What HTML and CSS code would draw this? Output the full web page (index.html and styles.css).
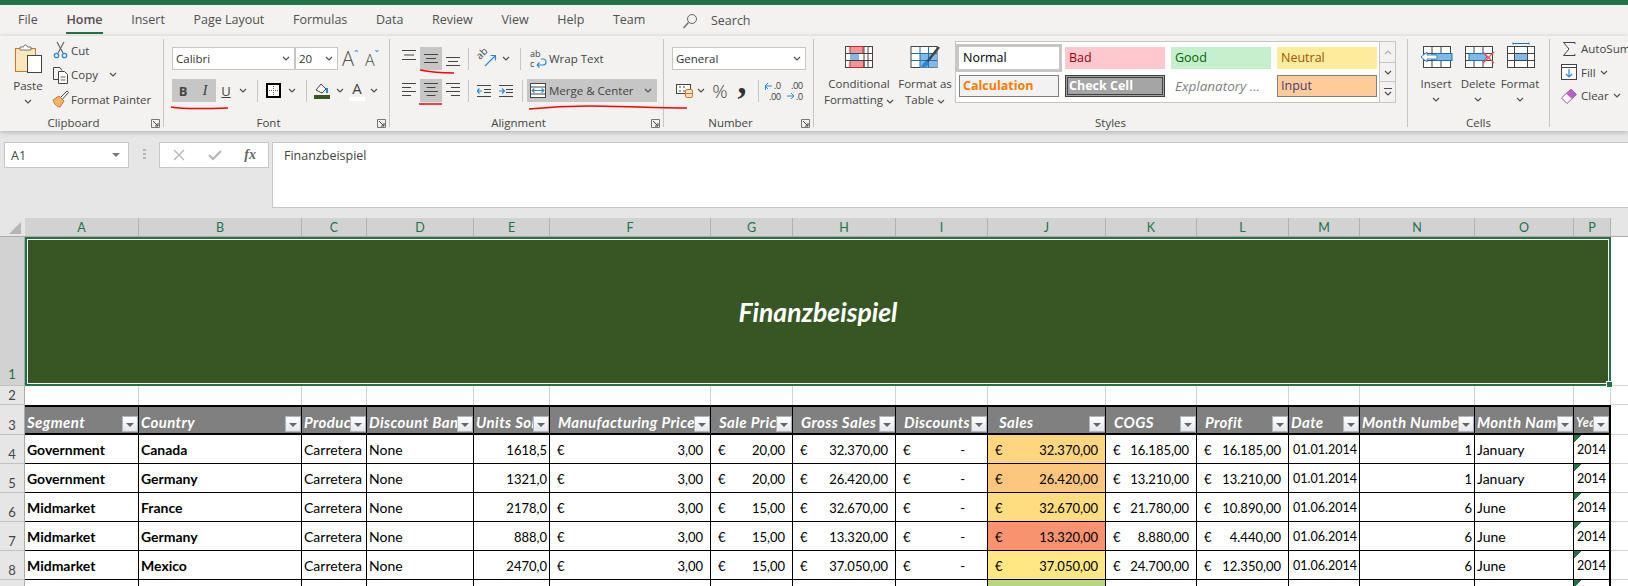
FILE: index.html
```html
<!DOCTYPE html>
<html lang="en">
<head>
  <meta charset="UTF-8">
  <title>Finanzbeispiel - Excel</title>
  <link rel="stylesheet" href="styles.css">
</head>
<body>
  <svg class="defs" width="0" height="0">
    <symbol id="chev" viewBox="0 0 8 5"><polyline points="1,1 4,4 7,1" fill="none" stroke="#505050" stroke-width="1.2"/></symbol>
    <symbol id="launch" viewBox="0 0 9 9"><path d="M.5 8.500V.5h8v8z" fill="none" stroke="#777"/><path d="M2 2l5 5M7 4v3H4" fill="none" stroke="#444"/></symbol>
    <symbol id="ind" viewBox="0 0 14 12"><path d="M0 .5h14M0 11.500h14M7 4.500h7M7 7.500h7" stroke="#444"/></symbol>
  </svg>

  <div class="titlebar"></div>

  <nav class="tabs">
    <span>File</span>
    <span class="tab-on">Home</span>
    <span>Insert</span>
    <span>Page Layout</span>
    <span>Formulas</span>
    <span>Data</span>
    <span>Review</span>
    <span>View</span>
    <span>Help</span>
    <span>Team</span>
    <span class="tab-search">
      <svg width="16" height="16" viewBox="0 0 16 16"><circle cx="10" cy="6" r="4.500" fill="none" stroke="#666"/><path d="M6.500 9.500L1.500 15" stroke="#666" stroke-width="1.3"/></svg>
      Search
    </span>
  </nav>

  <section class="ribbon">
    <div class="group g-clip">
      <div class="group-body">
        <div class="paste">
          <svg width="28" height="30" viewBox="0 0 28 30">
            <rect x="1.500" y="5.500" width="20" height="23" fill="#fbe7bd" stroke="#d5762a"/>
            <path d="M6 7V4h3.500a2 2 0 0 1 4 0H17v3z" fill="#fff" stroke="#777"/>
            <rect x="13.500" y="12.500" width="14" height="17" fill="#fff" stroke="#444"/>
          </svg>
          <span>Paste</span>
          <svg class="chev" viewBox="0 0 8 5"><use href="#chev"/></svg>
        </div>
        <div class="clip-list">
          <div class="clip-item">
            <svg width="17" height="18" viewBox="0 0 17 18"><path d="M5 1l6 11M12 1L6 12" stroke="#666" stroke-width="1.2" fill="none"/><circle cx="4.500" cy="14.500" r="2.200" fill="none" stroke="#2b88d8" stroke-width="1.3"/><circle cx="12.500" cy="14.500" r="2.200" fill="none" stroke="#2b88d8" stroke-width="1.3"/></svg>
            Cut
          </div>
          <div class="clip-item">
            <svg width="17" height="18" viewBox="0 0 17 18"><path d="M6 13.500H1.500V1.500H8l2 3" fill="none" stroke="#444"/><path d="M6.500 5.500h6l3 3v9h-9z" fill="#fff" stroke="#444"/><path d="M8.500 11h5M8.500 14h5" stroke="#666"/></svg>
            Copy
            <svg class="chev copy-chev" viewBox="0 0 8 5"><use href="#chev"/></svg>
          </div>
          <div class="clip-item">
            <svg width="17" height="18" viewBox="0 0 17 18"><path d="M1 10l6-4 5 5-4 6c-3 0-6-3-7-7z" fill="#f7b267" stroke="#d5762a"/><path d="M9 7l6-6 1.500 1.500-6 6.500" fill="#fff" stroke="#444"/></svg>
            Format Painter
          </div>
        </div>
      </div>
      <div class="group-label"><span>Clipboard</span><svg class="launch" viewBox="0 0 9 9"><use href="#launch"/></svg></div>
    </div>
    <div class="sep"></div>

    <div class="group g-font">
      <div class="tool-rows">
        <div class="tool-row">
          <div class="combo combo-font"><span>Calibri</span><svg class="chev" viewBox="0 0 8 5"><use href="#chev"/></svg></div>
          <div class="combo combo-size"><span>20</span><svg class="chev" viewBox="0 0 8 5"><use href="#chev"/></svg></div>
          <div class="grow-a"><span class="a-big">A</span><sup>ˆ</sup></div>
          <div class="grow-a shrink-a"><span class="a-small">A</span><sup>ˇ</sup></div>
        </div>
        <div class="tool-row">
          <div class="tb tb-22 on glyph-b">B</div>
          <div class="tb tb-22 on glyph-i">I</div>
          <div class="tb tb-20 glyph-u">U</div>
          <div class="tb tb-14"><svg class="chev" viewBox="0 0 8 5"><use href="#chev"/></svg></div>
          <div class="vsep vs-font1"></div>
          <div class="tb tb-24">
            <svg width="15" height="15" viewBox="0 0 15 15"><rect x="1" y="1" width="13" height="13" fill="#fff" stroke="#000" stroke-width="2"/><path d="M7.500 3v9M3 7.500h9" stroke="#666" stroke-dasharray="1 1"/></svg>
          </div>
          <div class="tb tb-14"><svg class="chev" viewBox="0 0 8 5"><use href="#chev"/></svg></div>
          <div class="vsep vs-font2"></div>
          <div class="tb tb-24 tb-col">
            <svg width="16" height="12" viewBox="0 0 16 12"><path d="M2 7l5-6 5 5-4 4z" fill="#fff" stroke="#444"/><path d="M13 5v5" stroke="#2b88d8" stroke-width="2"/></svg>
            <i class="colorbar colorbar-green"></i>
          </div>
          <div class="tb tb-12"><svg class="chev" viewBox="0 0 8 5"><use href="#chev"/></svg></div>
          <div class="tb tb-22 tb-col glyph-a">A<i class="colorbar colorbar-white"></i></div>
          <div class="tb tb-12"><svg class="chev" viewBox="0 0 8 5"><use href="#chev"/></svg></div>
        </div>
      </div>
      <div class="group-label"><span>Font</span><svg class="launch" viewBox="0 0 9 9"><use href="#launch"/></svg></div>
    </div>
    <div class="sep"></div>

    <div class="group g-align">
      <div class="tool-rows">
        <div class="tool-row">
          <div class="tb tb-22"><svg width="14" height="23" viewBox="0 0 14 23"><path d="M0 3.500h14M2 8h10M0 12.500h14" stroke="#444"/></svg></div>
          <div class="tb tb-22 on"><svg width="14" height="23" viewBox="0 0 14 23"><path d="M0 7.500h14M2 11.500h10M0 15.500h14" stroke="#444"/></svg></div>
          <div class="tb tb-22"><svg width="14" height="23" viewBox="0 0 14 23"><path d="M0 10.500h14M2 14.500h10M0 18.500h14" stroke="#444"/></svg></div>
          <div class="vsep vs-align"></div>
          <div class="tb tb-orient">
            <svg class="svg-free" width="18" height="20" viewBox="0 0 18 20"><text x="1" y="11" class="svg-txt" transform="rotate(-45 1 11)">ab</text><path d="M6 17L16 7M11.500 6.500H16.500V11.500" fill="none" stroke="#2b88d8" stroke-width="1.2"/></svg>
            <svg class="chev" viewBox="0 0 8 5"><use href="#chev"/></svg>
          </div>
          <div class="vsep vs-align2"></div>
          <div class="tb tb-wrap">
            <svg class="svg-free" width="17" height="20" viewBox="0 0 17 20"><text x="0" y="8" class="svg-wrap">ab</text><text x="0" y="18" class="svg-wrap">c</text><path d="M7 16h6a2.500 2.500 0 0 0 0-6h-2M7 16l2.500-2.500M7 16l2.500 2.500" fill="none" stroke="#2b88d8" stroke-width="1.1"/></svg>
            Wrap Text
          </div>
        </div>
        <div class="tool-row">
          <div class="tb tb-22"><svg width="14" height="23" viewBox="0 0 14 23"><path d="M0 4.500h14M0 8.500h9M0 12.500h14M0 16.500h9" stroke="#444"/></svg></div>
          <div class="tb tb-22 on"><svg width="14" height="23" viewBox="0 0 14 23"><path d="M0 4.500h14M2.500 8.500h9M0 12.500h14M2.500 16.500h9" stroke="#444"/></svg></div>
          <div class="tb tb-22"><svg width="14" height="23" viewBox="0 0 14 23"><path d="M0 4.500h14M5 8.500h9M0 12.500h14M5 16.500h9" stroke="#444"/></svg></div>
          <div class="vsep vs-align"></div>
          <div class="tb tb-indent">
            <svg width="14" height="12" viewBox="0 0 14 12"><use href="#ind"/><path d="M5 6H0M2.500 3.500L0 6l2.500 2.500" fill="none" stroke="#2b88d8" stroke-width="1.2"/></svg>
          </div>
          <div class="tb tb-indent">
            <svg width="14" height="12" viewBox="0 0 14 12"><use href="#ind"/><path d="M0 6h5M3 3.500L5.500 6 3 8.500" fill="none" stroke="#2b88d8" stroke-width="1.2"/></svg>
          </div>
          <div class="vsep vs-align3"></div>
          <div class="tb tb-merge on">
            <svg width="16" height="15" viewBox="0 0 16 15"><rect x=".5" y=".5" width="15" height="14" fill="#fff" stroke="#444"/><path d="M.5 4h15M.5 11h15" stroke="#444"/><path d="M2 7.500h12M4.500 5.500l-2.500 2 2.500 2M11.500 5.500l2.500 2-2.500 2" fill="none" stroke="#2b88d8" stroke-width="1.1"/></svg>
            <span>Merge &amp; Center</span>
            <svg class="chev" viewBox="0 0 8 5"><use href="#chev"/></svg>
          </div>
        </div>
      </div>
      <div class="group-label"><span>Alignment</span><svg class="launch" viewBox="0 0 9 9"><use href="#launch"/></svg></div>
    </div>
    <div class="sep"></div>

    <div class="group g-number">
      <div class="tool-rows">
        <div class="tool-row">
          <div class="combo combo-num"><span>General</span><svg class="chev" viewBox="0 0 8 5"><use href="#chev"/></svg></div>
        </div>
        <div class="tool-row">
          <div class="tb tb-acct">
            <svg width="18" height="15" viewBox="0 0 18 15"><rect x=".5" y="1.500" width="14" height="9" fill="#fff" stroke="#444"/><path d="M3 4h2M3 8h2M7 4h2M7 8h2" stroke="#444"/><rect x="9.500" y="6.500" width="7" height="8" rx="1.500" fill="#fce3c4" stroke="#d5762a"/><path d="M9.500 10.500h7" stroke="#d5762a"/></svg>
            <svg class="chev" viewBox="0 0 8 5"><use href="#chev"/></svg>
          </div>
          <div class="tb tb-24 glyph-pct">%</div>
          <div class="tb tb-20 glyph-comma">,</div>
          <div class="vsep vs-num"></div>
          <div class="tb tb-22">
            <svg class="svg-free" width="16" height="18" viewBox="0 0 16 18"><text x="16" y="7" class="svg-num">.0</text><text x="16" y="17.500" class="svg-num">.00</text><path d="M7 4H0M3 1L0 4l3 3M.5 4v4" fill="none" stroke="#2b88d8"/></svg>
          </div>
          <div class="tb tb-22">
            <svg class="svg-free" width="16" height="18" viewBox="0 0 16 18"><text x="16" y="7" class="svg-num">.00</text><text x="16" y="17.500" class="svg-num">.0</text><path d="M0 14h7M4 11l3 3-3 3" fill="none" stroke="#2b88d8"/></svg>
          </div>
        </div>
      </div>
      <div class="group-label"><span>Number</span><svg class="launch" viewBox="0 0 9 9"><use href="#launch"/></svg></div>
    </div>
    <div class="sep"></div>

    <div class="group g-styles">
      <div class="styles-body">
        <div class="big big-cf">
          <svg width="30" height="30" viewBox="0 0 30 30">
            <rect x="1.500" y="4.500" width="27" height="21" fill="#fff" stroke="#444"/>
            <rect x="6" y="4.500" width="13" height="7" fill="#f1969b" stroke="#d8232a"/>
            <rect x="6" y="11.500" width="9" height="7" fill="#83b9e8"/>
            <rect x="6" y="18.500" width="14" height="7" fill="#f1969b" stroke="#d8232a"/>
            <path d="M20 4.500v21M24 4.500v21M1.500 11.500h27M1.500 18.500h27" stroke="#444" fill="none"/>
          </svg>
          <span>Conditional</span>
          <span>Formatting <svg class="chev" viewBox="0 0 8 5"><use href="#chev"/></svg></span>
        </div>
        <div class="big big-ft">
          <svg width="30" height="30" viewBox="0 0 30 30">
            <rect x="1" y="4.500" width="26" height="21" fill="#fff" stroke="#444"/>
            <rect x="10" y="11.500" width="17" height="14" fill="#83b9e8"/>
            <path d="M10 4.500v21M18.500 4.500v21M1 11.500h26M1 18.500h26" stroke="#1f6fb5" fill="none"/>
            <path d="M29 5L17 20" stroke="#444" stroke-width="2.500"/>
            <path d="M17 19c-3 0-4 3-6 6 3 1 7 0 8-4z" fill="#2b88d8"/>
          </svg>
          <span>Format as</span>
          <span>Table <svg class="chev" viewBox="0 0 8 5"><use href="#chev"/></svg></span>
        </div>
        <div class="gallery">
          <div class="gallery-grid">
            <div class="st st-normal">Normal</div>
            <div class="st st-bad">Bad</div>
            <div class="st st-good">Good</div>
            <div class="st st-neutral">Neutral</div>
            <div class="st st-calc">Calculation</div>
            <div class="st st-check">Check Cell</div>
            <div class="st st-expl">Explanatory ...</div>
            <div class="st st-input">Input</div>
          </div>
          <div class="gallery-scroll">
            <div class="gs gs-up"><svg class="chev chev-up" viewBox="0 0 8 5"><use href="#chev"/></svg></div>
            <div class="gs gs-mid"><svg class="chev" viewBox="0 0 8 5"><use href="#chev"/></svg></div>
            <div class="gs gs-more"><i></i><svg class="chev" viewBox="0 0 8 5"><use href="#chev"/></svg></div>
          </div>
        </div>
      </div>
      <div class="group-label"><span>Styles</span></div>
    </div>
    <div class="sep"></div>

    <div class="group g-cells">
      <div class="styles-body">
        <div class="big big-cell">
          <svg width="33" height="30" viewBox="0 0 33 30">
            <rect x="3.500" y="4.500" width="27" height="21" fill="#fff" stroke="#444"/>
            <path d="M12 4.500v21M21 4.500v21M3.500 11.500h27M3.500 18.500h27" stroke="#444" fill="none"/>
            <rect x="14" y="11.500" width="18" height="7" fill="#83b9e8" stroke="#1f6fb5"/>
            <path d="M17 13H7V10L1 15l6 5v-3h10z" fill="#fff" stroke="#2b88d8"/>
          </svg>
          <span>Insert</span>
          <svg class="chev chev-big" viewBox="0 0 8 5"><use href="#chev"/></svg>
        </div>
        <div class="big big-cell">
          <svg width="33" height="30" viewBox="0 0 33 30">
            <rect x="3.500" y="4.500" width="27" height="21" fill="#fff" stroke="#444"/>
            <path d="M12 4.500v21M21 4.500v21M3.500 11.500h27M3.500 18.500h27" stroke="#444" fill="none"/>
            <path d="M7 11.500h15l3 3.500-3 3.500H7z" fill="#83b9e8" stroke="#1f6fb5"/>
            <path d="M21 10l11 11M32 10L21 21" stroke="#f0525a" stroke-width="1.300"/>
          </svg>
          <span>Delete</span>
          <svg class="chev chev-big" viewBox="0 0 8 5"><use href="#chev"/></svg>
        </div>
        <div class="big big-cell">
          <svg width="33" height="30" viewBox="0 0 33 30">
            <path d="M9 .5v2M25 .5v2M9 1.500h16" stroke="#1f6fb5" fill="none"/>
            <rect x="3.500" y="4.500" width="27" height="21" fill="#fff" stroke="#444"/>
            <rect x="10.500" y="11.500" width="13" height="7" fill="#83b9e8"/>
            <path d="M10.500 4.500v21M23.500 4.500v21M3.500 11.500h27M3.500 18.500h27" stroke="#444" fill="none"/>
          </svg>
          <span>Format</span>
          <svg class="chev chev-big" viewBox="0 0 8 5"><use href="#chev"/></svg>
        </div>
      </div>
      <div class="group-label"><span>Cells</span></div>
    </div>
    <div class="sep"></div>

    <div class="group g-edit">
      <div class="edit-item">
        <svg width="16" height="16" viewBox="0 0 16 16"><path d="M14 3V1.500H2.500L8 8l-5.500 6.500H14V13" fill="none" stroke="#444"/></svg>
        AutoSum
      </div>
      <div class="edit-item">
        <svg width="16" height="16" viewBox="0 0 16 16"><rect x=".5" y=".5" width="15" height="15" fill="#fff" stroke="#444"/><path d="M.5 3.500h15" stroke="#444"/><path d="M8 5v8M5 10l3 3 3-3" fill="none" stroke="#2b88d8" stroke-width="1.200"/></svg>
        Fill <svg class="chev" viewBox="0 0 8 5"><use href="#chev"/></svg>
      </div>
      <div class="edit-item">
        <svg width="16" height="16" viewBox="0 0 16 16"><path d="M10 1l5.500 5.500L6 15.500.5 10z" fill="#fff" stroke="#a44db0"/><path d="M10 1l5.500 5.500L11 11 5 5.500z" fill="#b565c0"/></svg>
        Clear <svg class="chev" viewBox="0 0 8 5"><use href="#chev"/></svg>
      </div>
    </div>
  </section>

  <section class="formula">
    <div class="namebox"><span>A1</span><i class="name-arrow"></i></div>
    <div class="grip"></div>
    <div class="fx-box">
      <svg width="12" height="12" viewBox="0 0 12 12"><path d="M1 1l10 10M11 1L1 11" stroke="#b5b5b5" stroke-width="1.300"/></svg>
      <svg width="14" height="12" viewBox="0 0 14 12"><path d="M1 6l4 4 8-8" fill="none" stroke="#b5b5b5" stroke-width="2"/></svg>
      <span class="fx">fx</span>
    </div>
    <div class="formula-input">Finanzbeispiel</div>
  </section>

  <table class="sheet">
    <colgroup>
      <col class="c-rh"><col class="c-a"><col class="c-b"><col class="c-c"><col class="c-d"><col class="c-e"><col class="c-f"><col class="c-g"><col class="c-h"><col class="c-i"><col class="c-j"><col class="c-k"><col class="c-l"><col class="c-m"><col class="c-n"><col class="c-o"><col class="c-p"><col class="c-q">
    </colgroup>
    <tr class="r-cols">
      <th class="corner"><i></i></th>
      <th>A</th><th>B</th><th>C</th><th>D</th><th>E</th><th>F</th><th>G</th><th>H</th><th>I</th><th>J</th><th>K</th><th>L</th><th>M</th><th>N</th><th>O</th><th>P</th>
      <th class="col-rest"></th>
    </tr>
    <tr class="r-title">
      <th class="rh rh-on">1</th>
      <td colspan="16" class="title">Finanzbeispiel<i class="handle"></i></td>
      <td class="q"></td>
    </tr>
    <tr class="r-gap">
      <th class="rh">2</th>
      <td></td><td></td><td></td><td></td><td></td><td></td><td></td><td></td><td></td><td></td><td></td><td></td><td></td><td></td><td></td><td></td>
      <td class="q"></td>
    </tr>
    <tr class="r-head">
      <th class="rh">3</th>
      <td>Segment<i class="flt"></i></td>
      <td>Country<i class="flt"></i></td>
      <td>Product<i class="flt"></i></td>
      <td>Discount Band<i class="flt"></i></td>
      <td>Units Sold<i class="flt"></i></td>
      <td class="ind">Manufacturing Price<i class="flt"></i></td>
      <td class="ind">Sale Price<i class="flt"></i></td>
      <td class="ind">Gross Sales<i class="flt"></i></td>
      <td class="ind">Discounts<i class="flt"></i></td>
      <td class="ind-l">Sales<i class="flt"></i></td>
      <td class="ind">COGS<i class="flt"></i></td>
      <td class="ind">Profit<i class="flt"></i></td>
      <td>Date<i class="flt"></i></td>
      <td>Month Number<i class="flt"></i></td>
      <td>Month Name<i class="flt"></i></td>
      <td class="last">Year<i class="flt"></i></td>
      <td class="q"></td>
    </tr>
    <tr class="r-data">
      <th class="rh">4</th>
      <td class="b">Government</td><td class="b">Canada</td><td>Carretera</td><td>None</td><td class="num">1618,5</td>
      <td class="money"><div class="acc"><span>€</span><span>3,00</span></div></td>
      <td class="money"><div class="acc"><span>€</span><span>20,00</span></div></td>
      <td class="money"><div class="acc"><span>€</span><span>32.370,00</span></div></td>
      <td class="money"><div class="acc acc-dash"><span>€</span><span>-</span></div></td>
      <td class="money s4"><div class="acc"><span>€</span><span>32.370,00</span></div></td>
      <td class="money"><div class="acc"><span>€</span><span>16.185,00</span></div></td>
      <td class="money"><div class="acc"><span>€</span><span>16.185,00</span></div></td>
      <td class="num date">01.01.2014</td><td class="num">1</td><td>January</td><td class="last flag">2014</td>
      <td class="q"></td>
    </tr>
    <tr class="r-data">
      <th class="rh">5</th>
      <td class="b">Government</td><td class="b">Germany</td><td>Carretera</td><td>None</td><td class="num">1321,0</td>
      <td class="money"><div class="acc"><span>€</span><span>3,00</span></div></td>
      <td class="money"><div class="acc"><span>€</span><span>20,00</span></div></td>
      <td class="money"><div class="acc"><span>€</span><span>26.420,00</span></div></td>
      <td class="money"><div class="acc acc-dash"><span>€</span><span>-</span></div></td>
      <td class="money s5"><div class="acc"><span>€</span><span>26.420,00</span></div></td>
      <td class="money"><div class="acc"><span>€</span><span>13.210,00</span></div></td>
      <td class="money"><div class="acc"><span>€</span><span>13.210,00</span></div></td>
      <td class="num date">01.01.2014</td><td class="num">1</td><td>January</td><td class="last flag">2014</td>
      <td class="q"></td>
    </tr>
    <tr class="r-data">
      <th class="rh">6</th>
      <td class="b">Midmarket</td><td class="b">France</td><td>Carretera</td><td>None</td><td class="num">2178,0</td>
      <td class="money"><div class="acc"><span>€</span><span>3,00</span></div></td>
      <td class="money"><div class="acc"><span>€</span><span>15,00</span></div></td>
      <td class="money"><div class="acc"><span>€</span><span>32.670,00</span></div></td>
      <td class="money"><div class="acc acc-dash"><span>€</span><span>-</span></div></td>
      <td class="money s6"><div class="acc"><span>€</span><span>32.670,00</span></div></td>
      <td class="money"><div class="acc"><span>€</span><span>21.780,00</span></div></td>
      <td class="money"><div class="acc"><span>€</span><span>10.890,00</span></div></td>
      <td class="num date">01.06.2014</td><td class="num">6</td><td>June</td><td class="last flag">2014</td>
      <td class="q"></td>
    </tr>
    <tr class="r-data">
      <th class="rh">7</th>
      <td class="b">Midmarket</td><td class="b">Germany</td><td>Carretera</td><td>None</td><td class="num">888,0</td>
      <td class="money"><div class="acc"><span>€</span><span>3,00</span></div></td>
      <td class="money"><div class="acc"><span>€</span><span>15,00</span></div></td>
      <td class="money"><div class="acc"><span>€</span><span>13.320,00</span></div></td>
      <td class="money"><div class="acc acc-dash"><span>€</span><span>-</span></div></td>
      <td class="money s7"><div class="acc"><span>€</span><span>13.320,00</span></div></td>
      <td class="money"><div class="acc"><span>€</span><span>8.880,00</span></div></td>
      <td class="money"><div class="acc"><span>€</span><span>4.440,00</span></div></td>
      <td class="num date">01.06.2014</td><td class="num">6</td><td>June</td><td class="last flag">2014</td>
      <td class="q"></td>
    </tr>
    <tr class="r-data">
      <th class="rh">8</th>
      <td class="b">Midmarket</td><td class="b">Mexico</td><td>Carretera</td><td>None</td><td class="num">2470,0</td>
      <td class="money"><div class="acc"><span>€</span><span>3,00</span></div></td>
      <td class="money"><div class="acc"><span>€</span><span>15,00</span></div></td>
      <td class="money"><div class="acc"><span>€</span><span>37.050,00</span></div></td>
      <td class="money"><div class="acc acc-dash"><span>€</span><span>-</span></div></td>
      <td class="money s8"><div class="acc"><span>€</span><span>37.050,00</span></div></td>
      <td class="money"><div class="acc"><span>€</span><span>24.700,00</span></div></td>
      <td class="money"><div class="acc"><span>€</span><span>12.350,00</span></div></td>
      <td class="num date">01.06.2014</td><td class="num">6</td><td>June</td><td class="last flag">2014</td>
      <td class="q"></td>
    </tr>
    <tr class="r-data">
      <th class="rh"></th>
      <td></td><td></td><td></td><td></td><td></td><td></td><td></td><td></td><td></td>
      <td class="s9"></td>
      <td></td><td></td><td></td><td></td><td></td><td class="last flag"></td>
      <td class="q"></td>
    </tr>
  </table>

  <!-- red pen marks drawn over the ribbon -->
  <svg class="ink" width="700" height="115" viewBox="0 0 700 115">
    <path d="M171 107c10 2 30 2 57 1"/>
    <path d="M420 70c10 2 22 3 34 3"/>
    <path d="M419 104h23"/>
    <path d="M529 109c20-2 40-3 60-3 32 0 66 2 98 2"/>
  </svg>
</body>
</html>
```

FILE: styles.css
```css
html, body {
  margin: 0;
  height: 586px;
  overflow: hidden;
}

body {
  width: 1628px;
  position: relative;
  background: #fff;
  font-family: "Open Sans", Arial, sans-serif;
  font-size: 11.5px;
  color: #444;
}

.defs {
  display: block;
  height: 0;
}

.titlebar {
  height: 5px;
  background: #217346;
}

/* tabs */
.tabs {
  display: flex;
  gap: 28.6px;
  height: 31px;
  padding-left: 18px;
  background: #f3f2f1;
  font-size: 12.5px;
  line-height: 30px;
  color: #505050;
  box-sizing: border-box;
}

.tab-on {
  height: 27px;
  font-weight: 600;
  border-bottom: 2px solid #217346;
}

.tab-search {
  display: flex;
  align-items: center;
  gap: 13px;
  margin-left: 8px;
}

/* ribbon */
.ribbon {
  display: flex;
  height: 95px;
  background: #f3f2f1;
  box-shadow: 0 1px 5px rgba(0,0,0,0.25);
  position: relative;
}

.sep {
  width: 1px;
  height: 88px;
  margin-top: 3px;
  background: #c8c6c4;
  flex: none;
}

.group {
  display: flex;
  flex-direction: column;
  height: 95px;
  box-sizing: border-box;
  flex: none;
}

.group-label {
  display: flex;
  align-items: center;
  margin-top: auto;
  height: 16px;
  line-height: 16px;
  text-align: center;
}

.group-label span {
  flex: 1;
}

.launch {
  width: 9px;
  height: 9px;
  margin-right: 3px;
  margin-left: 4px;
}

.chev {
  width: 8px;
  height: 5px;
  flex: none;
}

.chev-up {
  transform: scaleY(-1);
  opacity: 0.4;
}

.svg-free {
  overflow: visible;
}

.g-clip { width: 163px; padding-top: 2px; }
.g-font { width: 225px; padding-top: 11px; }
.g-align { width: 273px; padding-top: 11px; }
.g-number { width: 149px; padding-top: 11px; }
.g-styles { width: 593px; padding-top: 5px; }
.g-cells { width: 141px; padding-top: 5px; }
.g-edit { flex: 1; padding: 1px 0 0 11px; }

.group-body {
  display: flex;
}

.paste {
  display: flex;
  flex-direction: column;
  align-items: center;
  width: 34px;
  margin: 5px 0 0 11px;
  line-height: 16px;
}

.paste span {
  margin-top: 5px;
}

.paste .chev {
  margin-top: 5px;
}

.clip-list {
  margin-left: 7px;
}

.clip-item {
  display: flex;
  align-items: center;
  gap: 2px;
  height: 24.5px;
  white-space: nowrap;
}

.copy-chev {
  margin-left: 9px;
}

.tool-rows {
  display: flex;
  flex-direction: column;
  gap: 9px;
}

.tool-row {
  display: flex;
  align-items: center;
  height: 23px;
}

.g-font .tool-rows { padding-left: 8px; }
.g-align .tool-rows { padding-left: 8px; }
.g-number .tool-rows { padding-left: 8px; }

.combo {
  display: flex;
  align-items: center;
  justify-content: space-between;
  height: 23px;
  padding: 0 4px 0 3px;
  background: #fff;
  border: 1px solid #c8c6c4;
  box-sizing: border-box;
  color: #333;
}

.combo-font { width: 123px; }
.combo-size { width: 43px; }
.combo-num { width: 134px; }

.grow-a {
  display: flex;
  align-items: flex-start;
  width: 22px;
  margin-left: 4px;
  height: 23px;
  color: #505050;
}

.shrink-a {
  margin-left: 1px;
}

.grow-a sup {
  font-size: 11px;
  line-height: 15px;
  color: #2b88d8;
}

.a-big { font-size: 20px; line-height: 24px; font-weight: 300; }
.a-small { font-size: 16px; line-height: 26px; font-weight: 300; }

/* toolbar buttons */
.tb {
  display: flex;
  align-items: center;
  justify-content: center;
  height: 23px;
  flex: none;
}

.tb.on {
  background: #c6c6c6;
}

.tb-col {
  flex-direction: column;
}

.tb-12 { width: 12px; }
.tb-14 { width: 14px; }
.tb-20 { width: 20px; }
.tb-22 { width: 22px; }
.tb-24 { width: 24px; }

.glyph-b { font-weight: 700; font-size: 13px; }
.glyph-i { font-family: "Liberation Serif", serif; font-style: italic; font-size: 15px; }
.glyph-u { text-decoration: underline; font-size: 13px; }
.glyph-a { font-size: 15px; line-height: 17px; }
.glyph-pct { font-size: 19px; font-weight: 300; }

.glyph-comma {
  align-items: flex-start;
  margin-top: -7px;
  font-family: "Liberation Serif", serif;
  font-size: 36px;
  font-weight: 700;
  line-height: 10px;
  color: #333;
}

.colorbar {
  display: block;
  width: 16px;
  height: 4px;
}

.colorbar-green { background: #375623; }
.colorbar-white { background: #fff; }

.vsep {
  width: 1px;
  height: 22px;
  background: #c8c6c4;
  flex: none;
}

.vs-font1 { margin: 0 3px 0 7px; }
.vs-font2 { margin: 0 3px 0 7px; }
.vs-align { margin: 0 4px; }
.vs-align2 { margin: 0 4px 0 5px; }
.vs-align3 { margin: 0 4px 0 5px; }
.vs-num { margin: 0 3px 0 6px; }

.tb-orient {
  width: 42px;
  gap: 5px;
}

.tb-wrap {
  gap: 2px;
  padding-left: 5px;
}

.tb-indent {
  width: 22px;
}

.tb-merge {
  width: 130px;
  gap: 3px;
  justify-content: flex-start;
  padding-left: 3px;
  box-sizing: border-box;
}

.tb-merge span {
  width: 92px;
}

.tb-acct {
  width: 36px;
  gap: 3px;
}

.svg-txt {
  font-family: "Open Sans", sans-serif;
  font-size: 10px;
  fill: #444;
}

.svg-wrap {
  font-family: "Open Sans", sans-serif;
  font-size: 9px;
  fill: #444;
}

.svg-num {
  font-family: Lato, sans-serif;
  font-size: 8.5px;
  fill: #444;
  text-anchor: end;
}

/* styles and cells */
.styles-body {
  display: flex;
}

.big {
  display: flex;
  flex-direction: column;
  align-items: center;
  padding-top: 1px;
  line-height: 16px;
  white-space: nowrap;
  flex: none;
}

.big > svg:first-child {
  margin-bottom: 4px;
}

.big-cf { width: 80px; margin-left: 5px; }
.big-ft { width: 52px; }
.big-cell { width: 42px; }
.g-cells .styles-body { padding-left: 7px; }

.chev-big {
  margin-top: 5px;
}

.gallery {
  display: flex;
  width: 441px;
  height: 62px;
  margin-left: 4px;
  background: #fff;
  border: 1px solid #c6c6c6;
  box-sizing: border-box;
}

.gallery-grid {
  display: grid;
  grid-template-columns: repeat(4, 100px);
  grid-template-rows: 22px 22px;
  gap: 6px;
  padding: 5px 0 0 3px;
}

.st {
  font-size: 12.5px;
  line-height: 22px;
  padding-left: 4px;
  box-sizing: border-box;
  white-space: nowrap;
}

.st-normal { outline: 3px solid #c6c6c6; color: #000; }
.st-bad { background: #ffc7ce; color: #9c0006; }
.st-good { background: #c6efce; color: #006100; }
.st-neutral { background: #ffeb9c; color: #9c5700; }
.st-calc { background: #f2f2f2; border: 1px solid #7f7f7f; color: #fa7d00; font-weight: 700; line-height: 20px; padding-left: 3px; }
.st-check { background: #a5a5a5; border: 3px double #3f3f3f; color: #fff; font-weight: 700; line-height: 16px; padding-left: 1px; }
.st-expl { color: #7f7f7f; font-style: italic; font-size: 13.5px; }
.st-input { background: #ffcc99; border: 1px solid #7f7f7f; color: #3f3f76; line-height: 20px; padding-left: 3px; }

.gallery-scroll {
  display: flex;
  flex-direction: column;
  width: 15px;
  margin-left: auto;
  border-left: 1px solid #c6c6c6;
  background: #f3f2f1;
}

.gs {
  display: flex;
  flex-direction: column;
  align-items: center;
  justify-content: center;
  gap: 2px;
  border-bottom: 1px solid #c6c6c6;
  box-sizing: border-box;
}

.gs-up { height: 21px; }
.gs-mid { height: 19px; }
.gs-more { flex: 1; border-bottom: 0; }

.gs-more i {
  width: 8px;
  height: 1px;
  background: #505050;
}

.edit-item {
  display: flex;
  align-items: center;
  gap: 4px;
  height: 23.5px;
  white-space: nowrap;
}

/* formula bar */
.formula {
  display: flex;
  align-items: flex-start;
  height: 87px;
  padding: 11px 0 0 4px;
  background: #e6e6e6;
  box-sizing: border-box;
}

.namebox {
  display: flex;
  align-items: center;
  justify-content: space-between;
  width: 125px;
  height: 26px;
  padding: 0 8px 0 6px;
  background: #fff;
  border: 1px solid #c6c6c6;
  box-sizing: border-box;
  font-size: 12.5px;
}

.name-arrow {
  border-left: 4px solid transparent;
  border-right: 4px solid transparent;
  border-top: 4px solid #777;
}

.grip {
  width: 3px;
  height: 11px;
  margin: 7px 13px 0 14px;
  background: repeating-linear-gradient(#b5b5b5 0 2px, transparent 2px 4px);
}

.fx-box {
  display: flex;
  align-items: center;
  justify-content: space-between;
  width: 110px;
  height: 26px;
  padding: 0 12px 0 13px;
  background: #fff;
  border: 1px solid #c6c6c6;
  box-sizing: border-box;
}

.fx {
  font-family: "Liberation Serif", serif;
  font-style: italic;
  font-weight: 700;
  font-size: 14px;
  color: #666;
}

.formula-input {
  flex: 1;
  height: 66px;
  margin-left: 3px;
  padding: 4px 0 0 11px;
  background: #fff;
  border: 1px solid #c6c6c6;
  border-right: 0;
  box-sizing: border-box;
  font-size: 12.5px;
}

/* sheet */
.sheet {
  table-layout: fixed;
  width: 1628px;
  border-collapse: separate;
  border-spacing: 0;
  font-family: Lato, "Liberation Sans", sans-serif;
  font-size: 14px;
  color: #000;
}

.c-rh { width: 25px; }
.c-a { width: 114px; }
.c-b { width: 163px; }
.c-c { width: 65px; }
.c-d { width: 107px; }
.c-e { width: 76px; }
.c-f { width: 161px; }
.c-g { width: 82px; }
.c-h { width: 103px; }
.c-i { width: 92px; }
.c-j { width: 118px; }
.c-k { width: 91px; }
.c-l { width: 92px; }
.c-m { width: 71px; }
.c-n { width: 115px; }
.c-o { width: 99px; }
.c-p { width: 37px; }
.c-q { width: 17px; }

.sheet td, .sheet th {
  padding: 0;
  box-sizing: border-box;
  white-space: nowrap;
  overflow: hidden;
}

.r-cols { height: 19px; }
.r-title { height: 149px; }
.r-gap { height: 19px; }
.r-head { height: 30px; }
.r-data { height: 29px; }

.r-cols th {
  background: #d2d2d2;
  border-right: 1px solid #b1b1b1;
  border-bottom: 1px solid #ababab;
  font-weight: 400;
  font-size: 12.5px;
  color: #217346;
}

.sheet th.corner {
  background: #e6e6e6;
  border-right: 0;
}

.corner i {
  display: block;
  width: 0;
  height: 0;
  margin: 2px 0 0 9px;
  border-left: 12px solid transparent;
  border-bottom: 12px solid #b5b5b5;
}

.sheet th.col-rest {
  background: #e6e6e6;
  border-right: 0;
}

.sheet th.rh {
  padding-bottom: 1px;
  background: #e6e6e6;
  border-right: 1px solid #ababab;
  border-bottom: 1px solid #c0c0c0;
  font-weight: 400;
  font-size: 13px;
  color: #444;
  vertical-align: bottom;
}

.sheet th.rh-on {
  padding-bottom: 3px;
  background: #d2d2d2;
  color: #217346;
}

.sheet td.title {
  position: relative;
  overflow: visible;
  background: #375623;
  border: 2px solid #217346;
  box-shadow: inset 0 0 0 1px #fff;
  color: #fff;
  font-weight: 700;
  font-style: italic;
  font-size: 26.5px;
  text-align: center;
}

.handle {
  position: absolute;
  right: -4px;
  bottom: -4px;
  width: 5px;
  height: 5px;
  background: #217346;
  border: 1px solid #fff;
}

.r-gap td {
  border-right: 1px solid #d4d4d4;
}

.sheet td.q {
  border-right: 0;
  border-bottom: 1px solid #d4d4d4;
  background: #fff;
}

.r-head td {
  position: relative;
  padding: 4px 0 0 2px;
  background: #808080;
  border-top: 2px solid #000;
  border-bottom: 2px solid #000;
  border-right: 1px solid #000;
  color: #fff;
  font-size: 15px;
  letter-spacing: 0.4px;
  font-weight: 700;
  font-style: italic;
}

.r-head td.q {
  background: #fff;
  border-top: 0;
}

.sheet .r-head .ind { padding-left: 8px; }
.sheet .r-head .ind-l { padding-left: 11px; }

.flt {
  position: absolute;
  right: 0;
  bottom: 1px;
  width: 16px;
  height: 16px;
  background: linear-gradient(#fff, #e4e6ea);
  border: 1px solid #b0b4bb;
  box-sizing: border-box;
}

.flt::after {
  content: "";
  position: absolute;
  left: 3px;
  top: 6px;
  border-left: 4px solid transparent;
  border-right: 4px solid transparent;
  border-top: 4px solid #666;
}

.r-data td {
  padding: 1px 2px 0;
  border-right: 1px solid #000;
  border-bottom: 1px solid #000;
}

.sheet .b { font-weight: 700; }
.sheet .num { text-align: right; font-size: 13px; }
.sheet .money { font-size: 13px; }
.sheet .date { font-size: 12.5px; }

.sheet .last {
  border-right: 2px solid #000;
  font-size: 12.5px;
}

.sheet .flag {
  background: linear-gradient(135deg, #217346 5px, transparent 5px);
}

.r-data .last { padding-left: 3px; }

.acc {
  display: flex;
  justify-content: space-between;
  padding: 0 5px;
}

.acc-dash {
  padding-right: 20px;
}

.s4 { background: #fed680; }
.s5 { background: #fcc67c; }
.s6 { background: #fedd81; }
.s7 { background: #f9936f; }
.s8 { background: #ffe883; }
.s9 { background: #b9d67f; }

.ink {
  position: absolute;
  left: 0;
  top: 0;
  fill: none;
  stroke: #f00;
  stroke-width: 1.5;
}
```
